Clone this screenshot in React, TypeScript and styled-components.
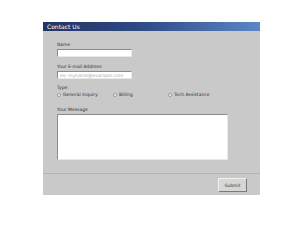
import styled, { createGlobalStyle } from 'styled-components'

const Global = createGlobalStyle`
  html, body {
    margin: 0;
    padding: 0;
    background: #ffffff;
  }
  body {
    font-family: "DejaVu Sans", "Liberation Sans", sans-serif;
  }
`

const Page = styled.div`
  width: 304px;
  height: 240px;
  padding: 22px 0 0 43px;
  box-sizing: border-box;
`

const Panel = styled.form`
  width: 217px;
  background: #c9c9c9;
  display: flex;
  flex-direction: column;
`

const Header = styled.div`
  height: 9px;
  background: linear-gradient(to right, #243463 0%, #2f4a84 45%, #5c86c6 100%);
  color: #ffffff;
  font-size: 6px;
  line-height: 9px;
  padding-left: 4px;
`

const Body = styled.div`
  display: flex;
  flex-direction: column;
  padding: 11px 0 13px 14px;
`

const Field = styled.div<{ $gap?: number }>`
  display: flex;
  flex-direction: column;
  margin-bottom: ${p => p.$gap ?? 0}px;
`

const Label = styled.label`
  font-size: 4.5px;
  line-height: 5px;
  color: #333;
  margin-bottom: 2px;
`

const TextInput = styled.input`
  width: 75px;
  height: 8px;
  box-sizing: border-box;
  border: 1px solid #8a8a8a;
  border-right-color: #e8e8e8;
  border-bottom-color: #e8e8e8;
  background: #fff;
  padding: 0 2px;
  font-size: 4.5px;
  font-family: inherit;
  outline: none;
  &::placeholder {
    color: #a8a8a8;
  }
`

const Radios = styled.div`
  display: grid;
  grid-template-columns: 56px 55px auto;
  align-items: center;
`

const Option = styled.label`
  display: flex;
  align-items: center;
  gap: 2px;
  font-size: 4.5px;
  color: #333;
`

const Dot = styled.span`
  width: 4px;
  height: 4px;
  border-radius: 50%;
  background: #fff;
  border: 0.5px solid #999;
  box-sizing: border-box;
`

const Message = styled.textarea`
  width: 171px;
  height: 46px;
  box-sizing: border-box;
  border: 1px solid #8a8a8a;
  border-right-color: #e8e8e8;
  border-bottom-color: #e8e8e8;
  background: #fff;
  resize: none;
  outline: none;
  padding: 0;
  display: block;
`

const Footer = styled.div`
  border-top: 1px solid #b4b4b4;
  display: flex;
  justify-content: flex-end;
  padding: 4px 13px 3px 0;
`

const Button = styled.button`
  width: 29px;
  height: 14px;
  box-sizing: border-box;
  font-family: inherit;
  font-size: 4.5px;
  color: #333;
  background: #d6d6d6;
  border: 1px solid #f0f0f0;
  border-right-color: #7a7a7a;
  border-bottom-color: #7a7a7a;
  padding: 0;
`

export default function App() {
  return (
    <>
      <Global />
      <Page>
        <Panel onSubmit={e => e.preventDefault()}>
          <Header>Contact Us</Header>
          <Body>
            <Field $gap={7}>
              <Label>Name</Label>
              <TextInput type="text" />
            </Field>
            <Field $gap={6}>
              <Label>Your E-mail Address</Label>
              <TextInput type="text" placeholder="ex: myname@example.com" />
            </Field>
            <Field $gap={10}>
              <Label>Type:</Label>
              <Radios>
                <Option><Dot />General Inquiry</Option>
                <Option><Dot />Billing</Option>
                <Option><Dot />Tech Assistance</Option>
              </Radios>
            </Field>
            <Field>
              <Label>Your Message</Label>
              <Message />
            </Field>
          </Body>
          <Footer>
            <Button type="submit">Submit</Button>
          </Footer>
        </Panel>
      </Page>
    </>
  )
}
